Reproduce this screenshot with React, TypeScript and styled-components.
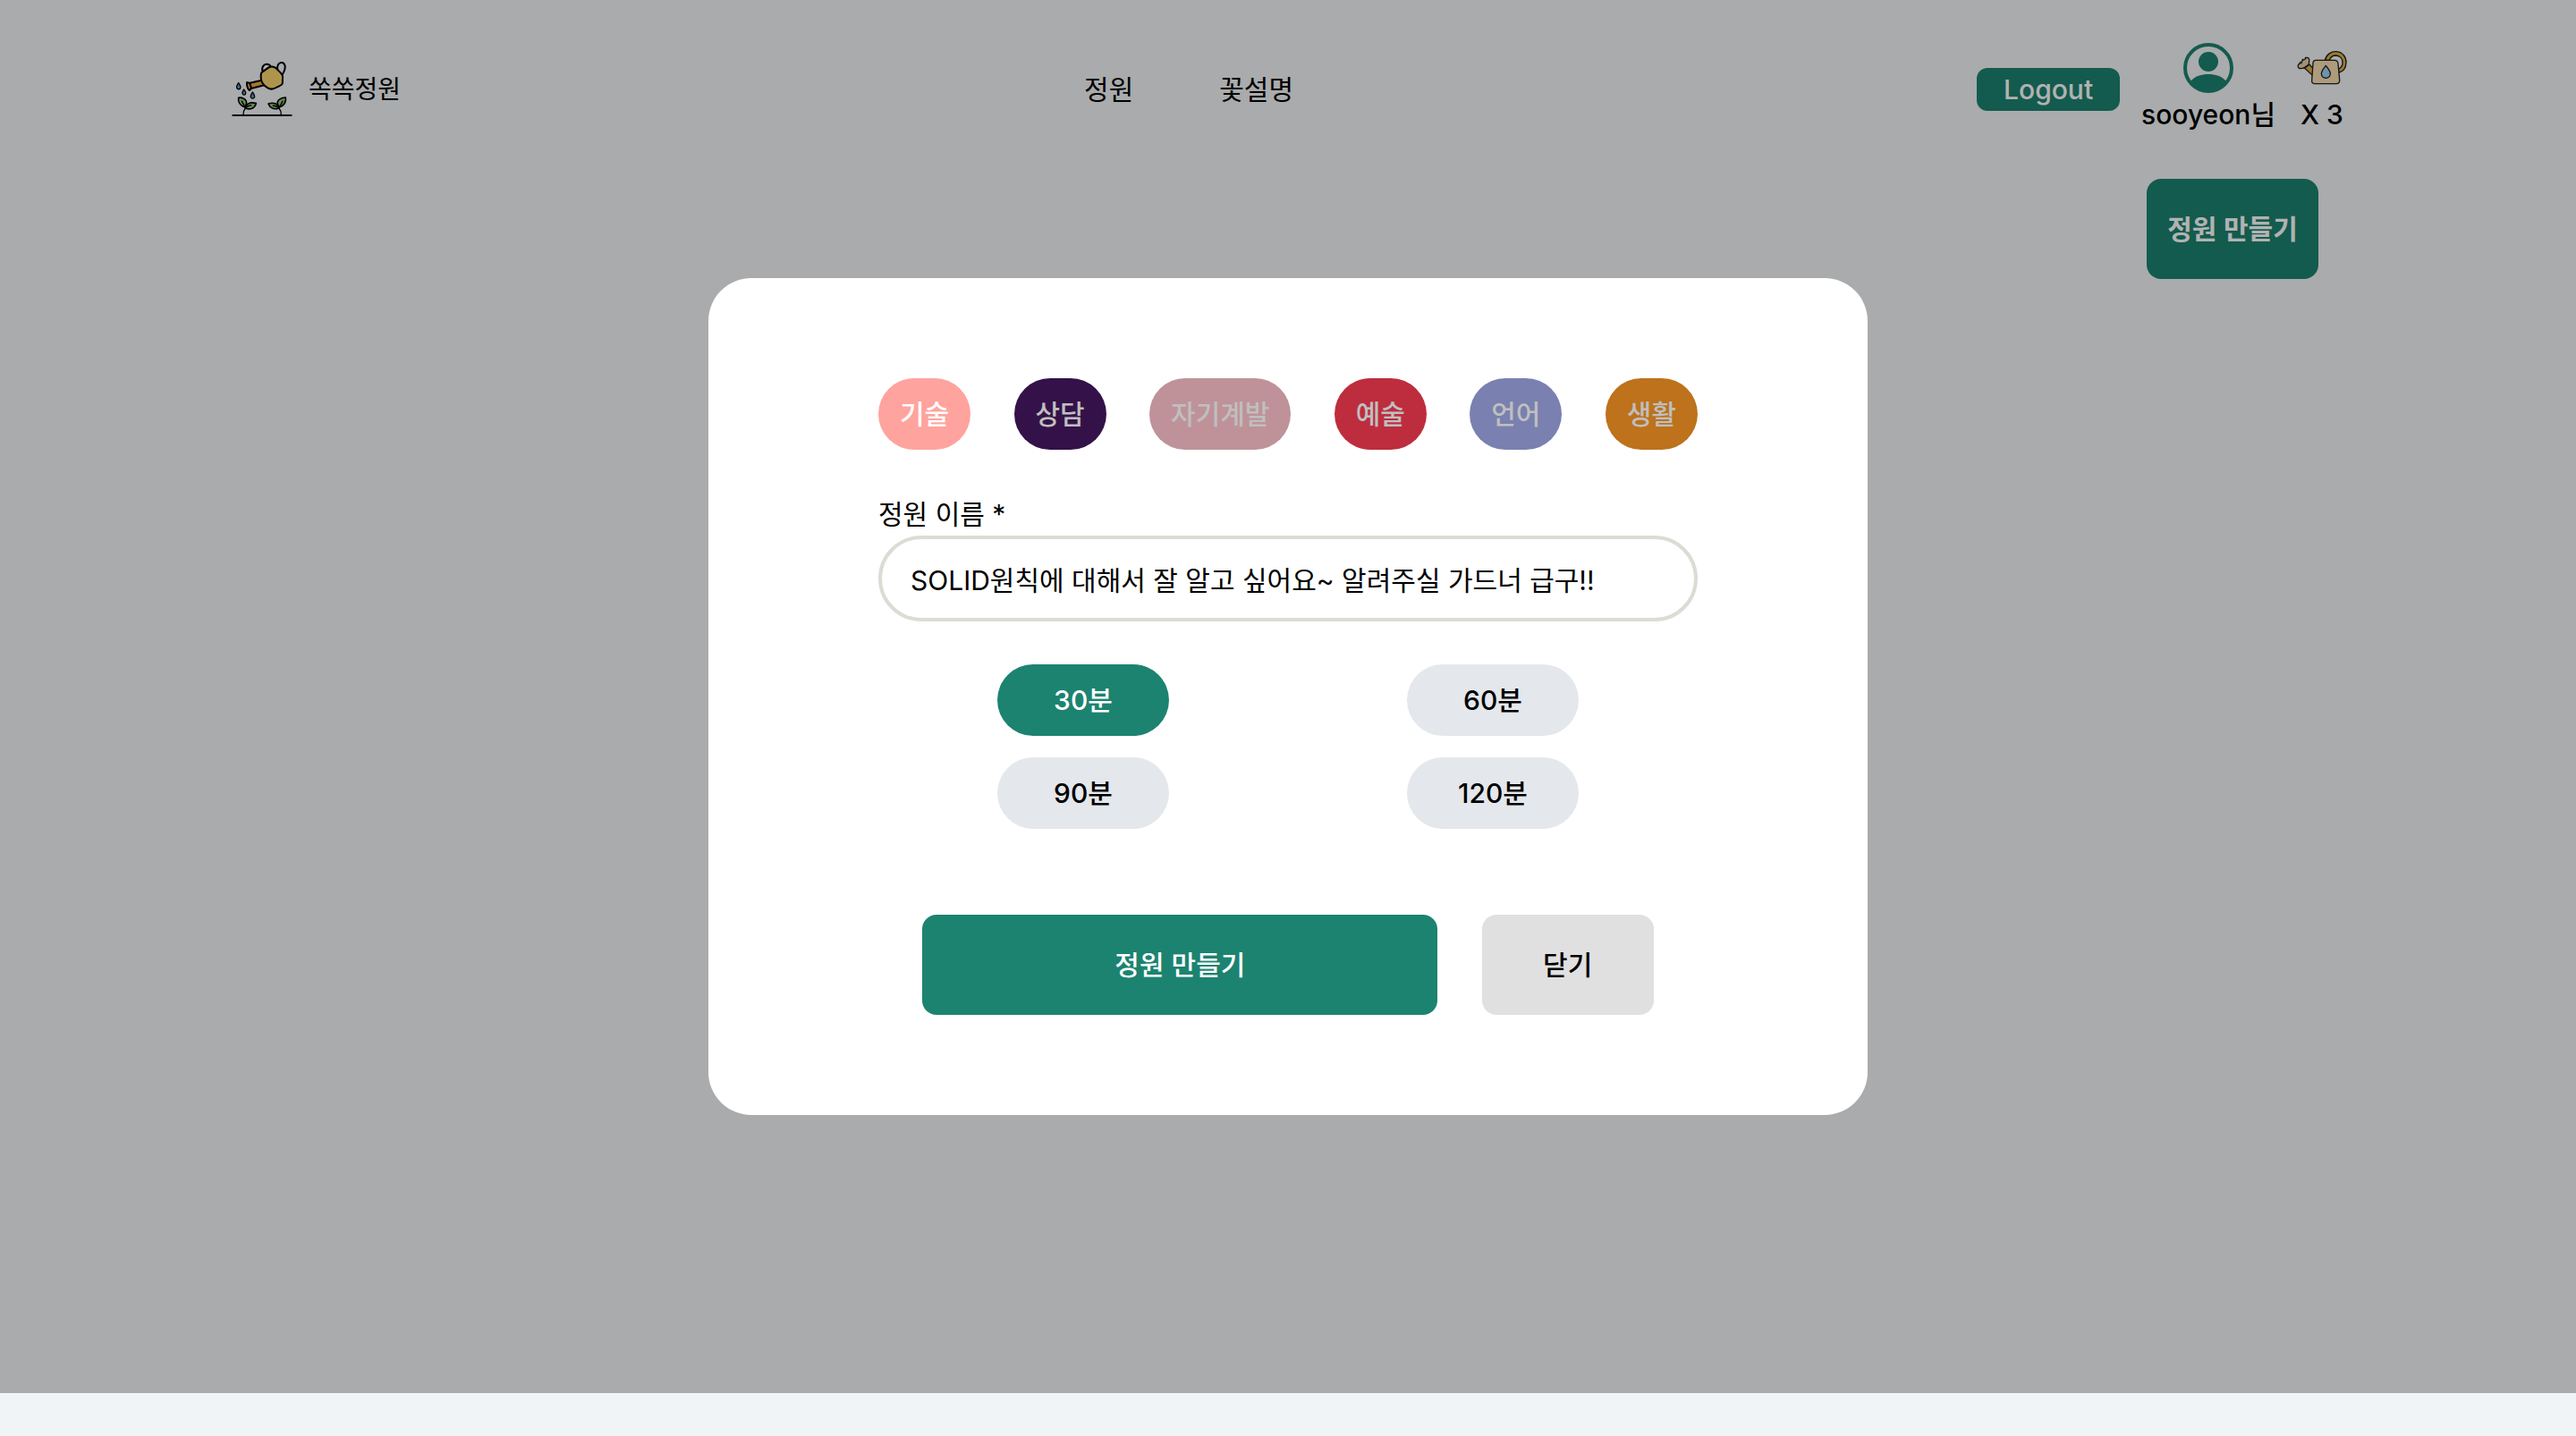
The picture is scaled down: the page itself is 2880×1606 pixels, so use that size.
import React, { useState } from "react";
import styled, { createGlobalStyle } from "styled-components";

const GlobalStyle = createGlobalStyle`
  *, *::before, *::after { box-sizing: border-box; }
  body {
    margin: 0;
    background: #f0f4f7;
    color: #000;
    font-family: Inter, "Noto Sans CJK KR", sans-serif;
    font-size: 30px;
    font-weight: 400;
    line-height: 48px;
  }
  button, input { font: inherit; color: inherit; }
  button { border: 0; padding: 0; cursor: pointer; font-weight: 500; }
  a { color: inherit; text-decoration: none; }
`;

const Page = styled.div`
  min-height: calc(100vh - 48px);
  background: #f3f5f6;
`;

const Header = styled.header`
  display: flex;
  align-items: center;
  justify-content: space-between;
  padding: 48px 256px;
`;

const Brand = styled.a`
  display: flex;
  align-items: center;
  gap: 18px;
  padding-left: 3px;
  font-size: 28px;
`;

const Nav = styled.nav`
  display: flex;
  gap: 96px;
`;

const Account = styled.div`
  display: flex;
  align-items: center;
  justify-content: flex-end;
  gap: 24px;
  font-weight: 500;
`;

const LogoutButton = styled.button`
  width: 160px;
  height: 48px;
  border-radius: 12px;
  background: #1c8370;
  color: #fff;
`;

const Stat = styled.div`
  display: flex;
  flex-direction: column;
  align-items: center;
`;

const Toolbar = styled.div`
  display: flex;
  justify-content: flex-end;
  padding: 0 288px;
`;

const ActionButton = styled.button<{ $wide?: boolean; $muted?: boolean; $strong?: boolean }>`
  width: ${(p) => (p.$wide ? 576 : 192)}px;
  height: 112px;
  border-radius: 16px;
  background: ${(p) => (p.$muted ? "#e0e0e0" : "#1c8370")};
  color: ${(p) => (p.$muted ? "#000" : "#fff")};
  font-weight: ${(p) => (p.$strong ? 600 : 500)};
`;

const Backdrop = styled.div`
  position: fixed;
  inset: 0 0 48px;
  display: flex;
  align-items: center;
  justify-content: center;
  background: rgba(0, 0, 0, 0.3);
`;

const Dialog = styled.form`
  width: 45%;
  min-width: 1296px;
  padding: 112px 190px;
  border-radius: 48px;
  background: #fff;
`;

const Categories = styled.div`
  display: flex;
  justify-content: space-between;
  margin-bottom: 48px;
`;

const Chip = styled.button<{ $color: string; $active: boolean }>`
  height: 80px;
  padding: 0 24px;
  border-radius: 40px;
  background: ${(p) => p.$color};
  color: ${(p) => (p.$active ? "#fff" : "#bfbfbf")};
`;

const FieldLabel = styled.label`
  display: block;
`;

const NameInput = styled.input`
  display: block;
  width: 100%;
  height: 96px;
  padding: 0 32px;
  border: 4px solid #dbdcd3;
  border-radius: 48px;
  background: #fff;
  outline: none;
`;

const Durations = styled.div`
  display: grid;
  grid-template-columns: 1fr 1fr;
  justify-items: center;
  gap: 24px 0;
  margin: 48px 0 96px;
`;

const DurationButton = styled.button<{ $active: boolean }>`
  width: 192px;
  height: 80px;
  border-radius: 40px;
  background: ${(p) => (p.$active ? "#1c8370" : "#e4e7ec")};
  color: ${(p) => (p.$active ? "#fff" : "#000")};
`;

const Actions = styled.div`
  display: flex;
  justify-content: space-evenly;
`;

const LogoIcon = () => (
  <svg width="68" height="62" viewBox="57 58 204 186" fill="none" stroke="#000" strokeWidth="6" strokeLinecap="round" strokeLinejoin="round" aria-hidden="true">
    <path d="M160 88C157 73 168 65 176 66C183 67 187 70 188 76" />
    <path d="M211 84C208 68 218 60 226 61C237 63 239 78 232 92C229 99 226 103 223 104" />
    <path d="M116 130L158 120L166 137L119 149Z" fill="#f0a94a" />
    <path d="M108 128C113 127 117 129 119 134C123 143 124 151 116 154C111 152 107 135 108 128Z" fill="#f0a94a" />
    <path d="M160 92C168 88 176 80 184 76C191 73 199 74 206 80L222 96C229 102 229 108 228 114C227 120 229 126 227 132C224 139 214 140 206 145C198 150 186 151 178 146C164 138 155 124 155 110C155 102 154 95 160 92Z" fill="#fbd66c" />
    <g fill="#5c9fd6" strokeWidth="4">
      <path d="M80 129C76 135 73 140 74 145C76 152 85 152 87 145C88 140 84 135 80 129Z" />
      <path d="M98 151C95 156 92 160 93 164C95 171 103 171 104 164C105 160 101 156 98 151Z" />
      <path d="M127 160C123 166 120 171 121 176C123 183 132 183 134 176C135 171 131 166 127 160Z" />
    </g>
    <g fill="#94c47a" strokeWidth="5">
      <path d="M80 179C91 177 103 182 106 191C108 199 105 206 100 210C85 205 78 192 80 179Z" />
      <path d="M103 213C105 199 119 192 139 198C135 214 119 222 103 213Z" />
      <path d="M238 178C225 179 214 184 211 193C210 200 213 207 218 210C233 205 240 193 238 178Z" />
      <path d="M216 213C213 200 200 193 180 199C185 213 200 221 216 213Z" />
    </g>
    <path d="M91 190C96 201 103 210 103 214C98 220 96 228 96 236M122 204C112 206 106 210 103 214" strokeWidth="4" />
    <path d="M228 190C224 200 217 208 216 214C221 220 223 228 223 236M196 205C205 206 211 209 216 214" strokeWidth="4" />
    <path d="M61 238H257" />
  </svg>
);

const ProfileIcon = () => (
  <svg width="56" height="56" viewBox="0 0 56 56" aria-hidden="true">
    <circle cx="28" cy="28" r="26" fill="none" stroke="#1c8370" strokeWidth="4" />
    <circle cx="28" cy="21" r="11" fill="#1c8370" />
    <path d="M8 43C13 37 20 35 28 35C36 35 43 37 48 43C43 51 36 54 28 54C20 54 13 51 8 43Z" fill="#1c8370" />
  </svg>
);

const WateringCanIcon = () => (
  <svg width="56" height="56" viewBox="54 24 168 168" stroke="#222" strokeWidth="4" strokeLinecap="round" strokeLinejoin="round" aria-hidden="true">
    <path d="M148 82C153 62 169 52 187 53C207 55 220 71 219 91C218 109 208 121 194 124L193 112C202 108 207 100 207 90C207 76 198 67 185 66C174 66 166 72 163 82Z" fill="#e0b040" />
    <path d="M96 96L108 110V134L80 109Z" fill="#e0b040" />
    <path d="M58 99C60 93 65 92 69 92C71 82 78 80 80 80C84 73 89 71 93 75C98 80 94 88 94 94C94 98 88 100 85 103C80 108 75 110 68 110C60 110 56 106 58 99Z" fill="#ebcfa4" />
    <path d="M64 90L66 88M72 81L74 79M82 74L84 73" />
    <path d="M118 82H180C187 82 191 86 192 93L197 148C198 156 194 161 186 161H114C107 161 103 157 104 149L108 92C108 85 112 82 118 82Z" fill="#f8dfb2" />
    <path d="M151 100C144 109 136 118 136 127C136 147 166 147 166 127C166 118 158 109 151 100Z" fill="#9fd3f5" />
  </svg>
);

const categories = [
  { name: "기술", color: "#ffa39e" },
  { name: "상담", color: "#341249" },
  { name: "자기계발", color: "#bf9299" },
  { name: "예술", color: "#be2d3e" },
  { name: "언어", color: "#7a80b0" },
  { name: "생활", color: "#bd721b" },
];

const durations = [30, 60, 90, 120];

export default function App() {
  const [category, setCategory] = useState("기술");
  const [duration, setDuration] = useState(30);
  const [name, setName] = useState("SOLID원칙에 대해서 잘 알고 싶어요~ 알려주실 가드너 급구!!");

  return (
    <Page>
      <GlobalStyle />
      <Header>
        <Brand href="#">
          <LogoIcon />
          쏙쏙정원
        </Brand>
        <Nav>
          <a href="#garden">정원</a>
          <a href="#flowers">꽃설명</a>
        </Nav>
        <Account>
          <LogoutButton type="button">Logout</LogoutButton>
          <Stat>
            <ProfileIcon />
            <span>sooyeon님</span>
          </Stat>
          <Stat>
            <WateringCanIcon />
            <span>X 3</span>
          </Stat>
        </Account>
      </Header>
      <Toolbar>
        <ActionButton type="button" $strong>정원 만들기</ActionButton>
      </Toolbar>

      <Backdrop>
        <Dialog role="dialog" aria-modal="true" onSubmit={(e) => e.preventDefault()}>
          <Categories>
            {categories.map((c) => (
              <Chip
                key={c.name}
                type="button"
                $color={c.color}
                $active={c.name === category}
                aria-pressed={c.name === category}
                onClick={() => setCategory(c.name)}
              >
                {c.name}
              </Chip>
            ))}
          </Categories>
          <FieldLabel htmlFor="garden-name">정원 이름 *</FieldLabel>
          <NameInput id="garden-name" type="text" value={name} onChange={(e) => setName(e.target.value)} />
          <Durations>
            {durations.map((d) => (
              <DurationButton
                key={d}
                type="button"
                $active={d === duration}
                aria-pressed={d === duration}
                onClick={() => setDuration(d)}
              >
                {d}분
              </DurationButton>
            ))}
          </Durations>
          <Actions>
            <ActionButton type="submit" $wide>정원 만들기</ActionButton>
            <ActionButton type="button" $muted>닫기</ActionButton>
          </Actions>
        </Dialog>
      </Backdrop>
    </Page>
  );
}
